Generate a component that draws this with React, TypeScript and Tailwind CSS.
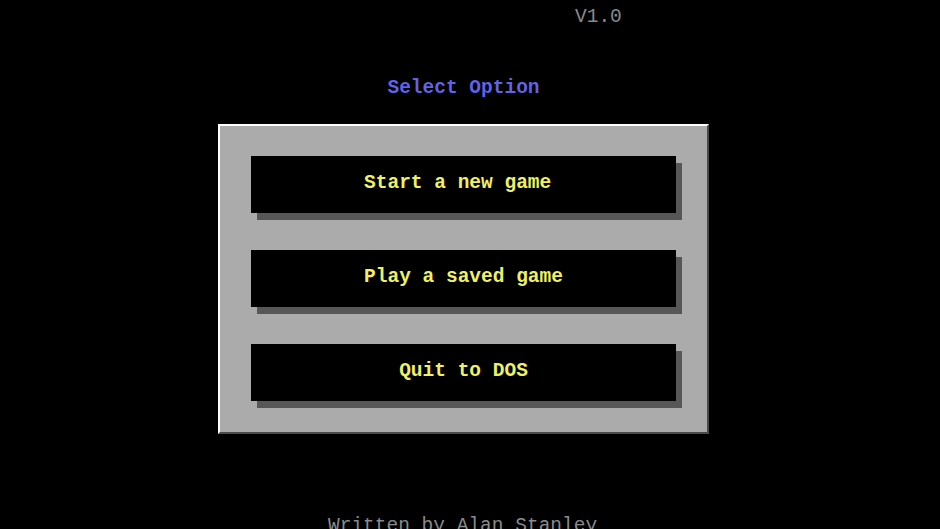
const font = { fontFamily: '"Liberation Mono", "DejaVu Sans Mono", monospace' }

// odd-width labels centre exactly, even ones sit half a cell left, as in text mode
const options = ['Start a new game ', 'Play a saved game', 'Quit to DOS']

function MenuButton({ label }: { label: string }) {
  return (
    <div className="relative h-[57px] w-[425px]">
      <div className="absolute left-[6px] top-[7px] h-[57px] w-[425px] bg-[#575757]" />
      <div className="relative flex h-full w-full items-center justify-center whitespace-pre bg-black pb-[4px] text-[19.5px] font-bold leading-6 text-[#f0f064]">
        {label}
      </div>
    </div>
  )
}

export default function App() {
  return (
    <div className="h-[529px] w-[940px] overflow-hidden bg-black" style={font}>
      <div className="ml-[575px] pt-[5px] text-[19.5px] leading-6 text-[#8a8a8a]">V1.0</div>
      <div className="ml-[218px] w-[491px]">
        <div className="mt-[47px] text-center text-[19.5px] font-bold leading-6 text-[#6262e6]">
          Select Option
        </div>
        <div className="mt-[24px] flex h-[310px] w-[491px] flex-col gap-[37px] border-t-2 border-l-2 border-r-2 border-b-2 border-t-white border-l-white border-r-[#4a4a4a] border-b-[#4a4a4a] bg-[#ababab] pl-[31px] pt-[30px]">
          {options.map((o) => (
            <MenuButton key={o} label={o} />
          ))}
        </div>
      </div>
      <div className="mt-[80px] ml-[328px] text-[19.5px] leading-6 text-[#8a8a8a]">Written by Alan Stanley</div>
    </div>
  )
}
